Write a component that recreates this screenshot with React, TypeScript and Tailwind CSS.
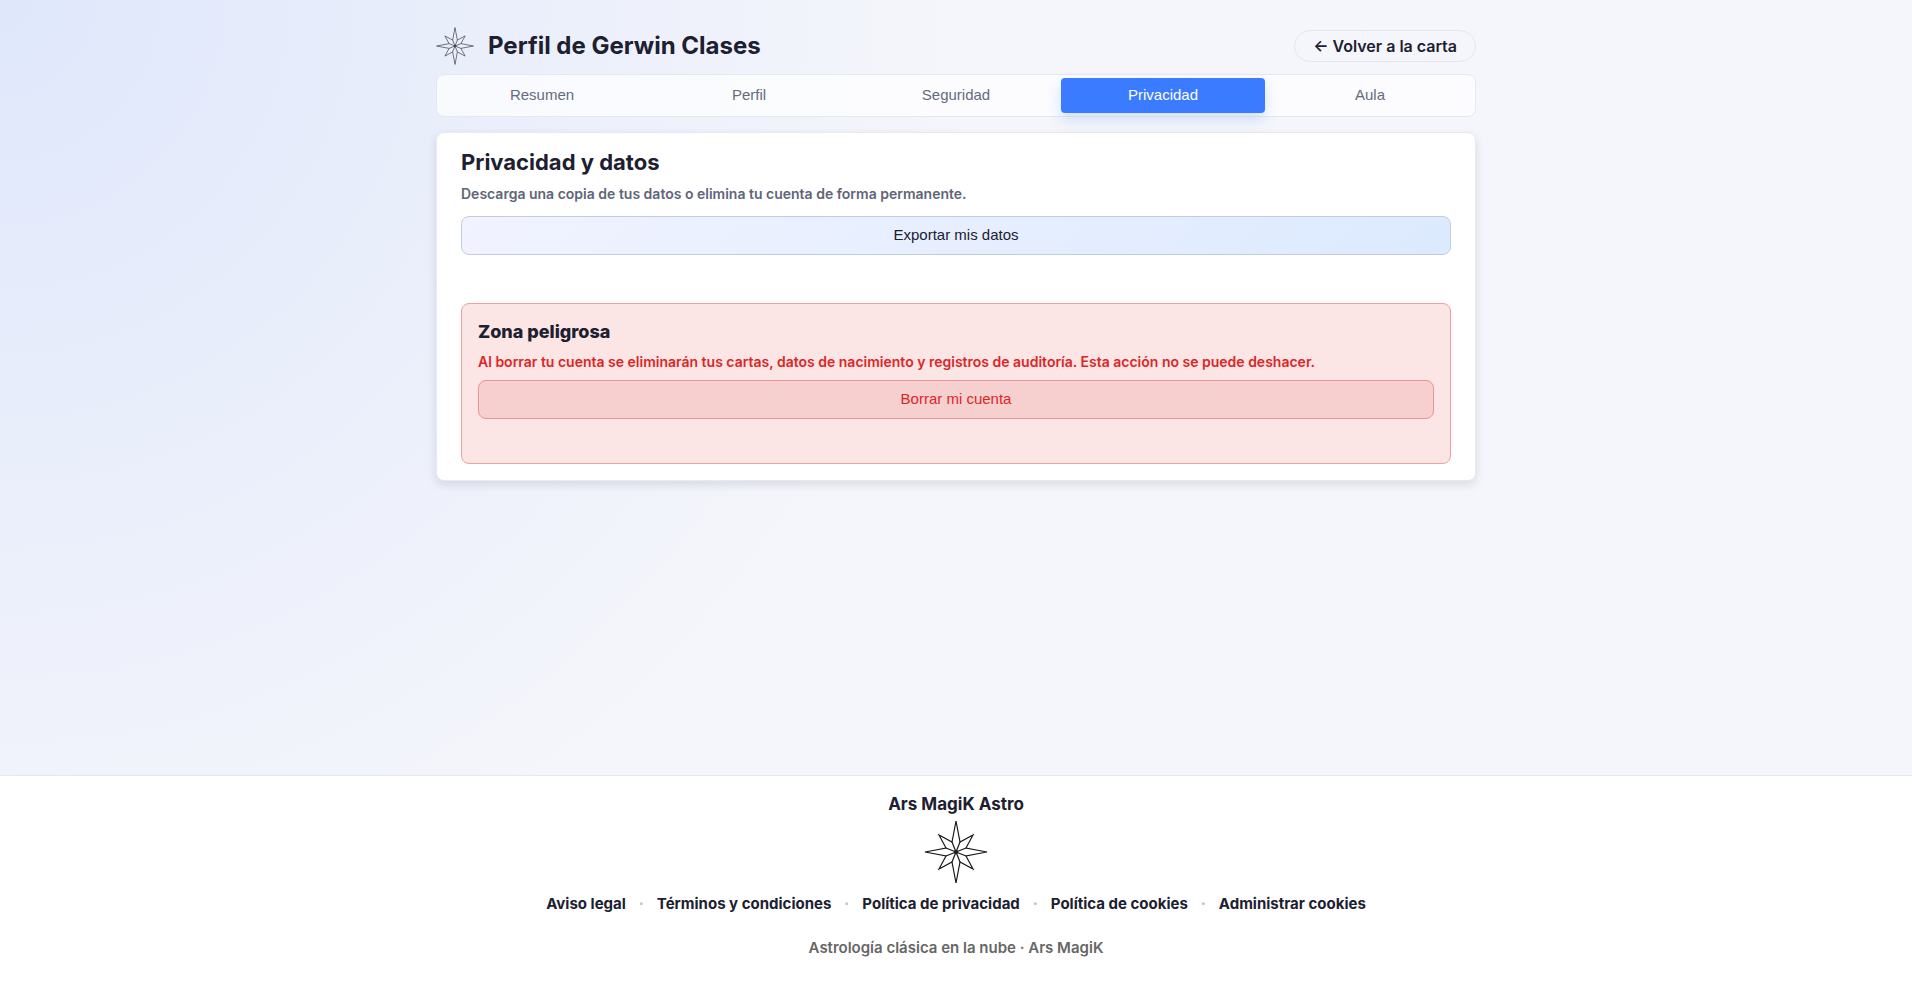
import { useState } from 'react';

const tabs = ['Resumen', 'Perfil', 'Seguridad', 'Privacidad', 'Aula'];

const legalLinks = [
  'Aviso legal',
  'Términos y condiciones',
  'Política de privacidad',
  'Política de cookies',
  'Administrar cookies',
];

// Eight-pointed star, outline plus spokes to the inner corners
function StarLogo({ className }: { className: string }) {
  return (
    <svg viewBox="-32 -32 64 64" className={className} fill="none" stroke="currentColor" strokeWidth="1.2" aria-hidden="true">
      <path d="M0-31 4-10 17-17 10-4 31 0 10 4 17 17 4 10 0 31-4 10-17 17-10 4-31 0-10-4-17-17-4-10Z" />
      <path d="M4-10-4 10M10-4-10 4M10 4-10-4M4 10-4-10" />
      <circle r="1.5" fill="currentColor" />
    </svg>
  );
}

export default function App() {
  const [activeTab, setActiveTab] = useState('Privacidad');

  return (
    <div className="flex min-h-screen flex-col bg-[#f5f6fb] bg-[radial-gradient(circle_at_top_left,#dfe7fb,#f5f6fb_45%)] font-['Inter',sans-serif] font-semibold text-[#1c2030]">
      <main className="mx-auto w-full max-w-[1040px] flex-1 pt-[27px] pb-12">
        {/* Header */}
        <header className="mb-[9px] flex items-center justify-between">
          <div className="flex items-center gap-3.5">
            <StarLogo className="size-[38px] text-[#3c3f48]" />
            <h1 className="text-2xl leading-8 font-bold">Perfil de Gerwin Clases</h1>
          </div>
          <a href="#carta" className="rounded-full border border-[#e4e6ec] px-[18px] py-[3px] text-base leading-6">
            ← Volver a la carta
          </a>
        </header>

        {/* Tabs */}
        <nav className="mb-[15px] grid grid-cols-5 gap-[3px] rounded-lg border border-[#e6e8ef] bg-white/70 p-[3px]">
          {tabs.map((tab) => (
            <button
              key={tab}
              type="button"
              onClick={() => setActiveTab(tab)}
              className={`h-[35px] rounded font-['Liberation_Sans',sans-serif] text-[15px] font-normal ${
                tab === activeTab
                  ? 'bg-[#3b7bff] text-white shadow-[0_6px_14px_rgba(59,123,255,0.22)]'
                  : 'text-[#646b80]'
              }`}
            >
              {tab}
            </button>
          ))}
        </nav>

        {/* Privacy card */}
        <section className="rounded-lg border border-[#e8eaf0] bg-white px-6 pt-[15px] pb-4 shadow-[0_4px_10px_rgba(20,30,60,0.12)]">
          <h2 className="text-[22px] leading-7 font-bold">Privacidad y datos</h2>
          <p className="mt-2 text-sm leading-5 text-[#5f6579]">
            Descarga una copia de tus datos o elimina tu cuenta de forma permanente.
          </p>
          <button
            type="button"
            className="mt-3 h-[39px] w-full rounded-lg border border-[#c3cbe0] bg-linear-135 from-[#f1f3ff] to-[#dceafe] font-['Liberation_Sans',sans-serif] text-[15px] font-normal"
          >
            Exportar mis datos
          </button>

          <div className="mt-12 rounded-lg border border-[#f0a0a0] bg-[#fbe5e5] px-4 pt-4 pb-11">
            <h3 className="text-lg leading-6 font-extrabold">Zona peligrosa</h3>
            <p className="mt-2 text-sm leading-5 text-[#dc2626]">
              Al borrar tu cuenta se eliminarán tus cartas, datos de nacimiento y registros de auditoría. Esta acción no se puede deshacer.
            </p>
            <button
              type="button"
              className="mt-2 h-[39px] w-full rounded-lg border border-[#ee9292] bg-[#f6cfcf] font-['Liberation_Sans',sans-serif] text-[15px] font-normal text-[#dc2626]"
            >
              Borrar mi cuenta
            </button>
          </div>
        </section>
      </main>

      <footer className="flex flex-col items-center border-t border-[#e6e8ef] bg-white pt-4 pb-[25px]">
        <p className="text-[17px] leading-6 font-bold">Ars MagiK Astro</p>
        <StarLogo className="mt-1 size-16 text-[#1a1a1a]" />
        <nav className="mt-2 flex items-center gap-[13px] text-[15px] leading-6 font-bold">
          {legalLinks.map((link, i) => (
            <div key={link} className="flex items-center gap-[13px]">
              {i > 0 && <span className="text-[#b9bdc6]">·</span>}
              <a href="#legal">{link}</a>
            </div>
          ))}
        </nav>
        <p className="mt-5 text-[15px] leading-6 text-[#666666]">Astrología clásica en la nube · Ars MagiK</p>
      </footer>
    </div>
  );
}
